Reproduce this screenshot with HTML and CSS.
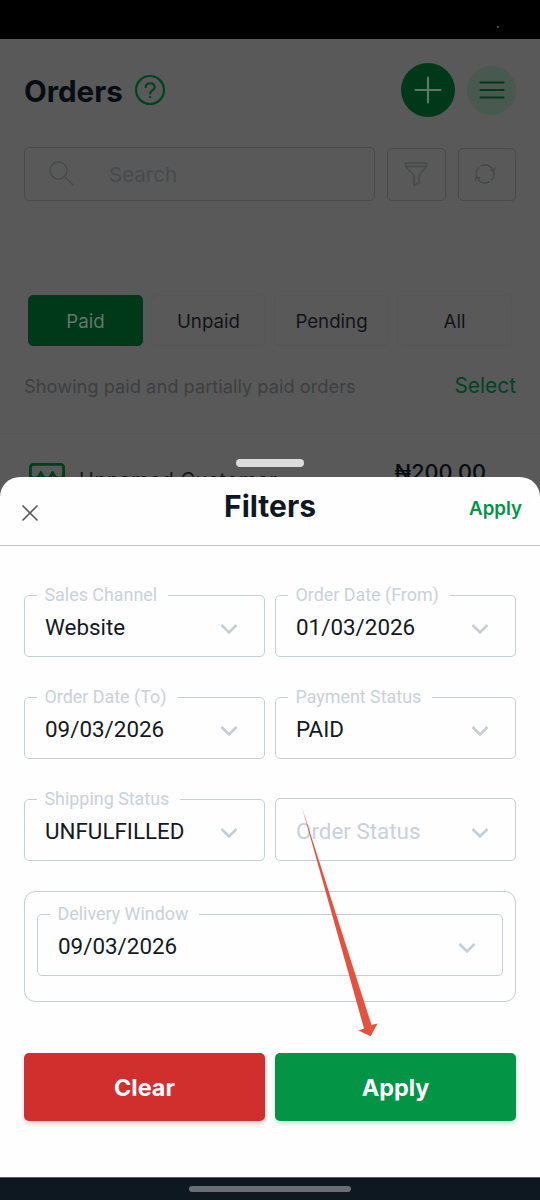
FILE: index.html
```html
<!DOCTYPE html>
<html lang="en">
<head>
<meta charset="utf-8">
<title>Orders</title>
<link rel="stylesheet" href="styles.css">
</head>
<body>
<div class="phone">
  <div class="status-bar"><i class="speck"></i></div>
  <main class="orders">
    <header class="topbar">
      <h1 class="title">Orders</h1>
      <svg class="help" width="32" height="32" viewBox="0 0 32 32" fill="none" stroke="#004322" stroke-width="2.2" stroke-linecap="round"><circle cx="16" cy="16" r="14"/><path d="M11.7 13.2c0-5.3 9-5.3 9 0 0 3.2-4.5 3-4.5 6.3"/><circle cx="16.1" cy="22.9" r=".5" stroke-width="1.4"/></svg>
      <span class="add"><svg width="28" height="28" viewBox="0 0 28 28" stroke="#5c7766" stroke-width="2.2" stroke-linecap="round"><path d="M14 1.5v25M1.5 14h25"/></svg></span>
      <span class="menu"><svg width="26" height="20" viewBox="0 0 26 20" stroke="#00381a" stroke-width="2" stroke-linecap="round"><path d="M1.5 2.5h23M1.5 10h23M1.5 17.5h23"/></svg></span>
    </header>
    <div class="tools">
      <div class="search">
        <svg width="26" height="26" viewBox="0 0 26 26" fill="none" stroke="#474a4b" stroke-width="1.5"><circle cx="9.5" cy="9.5" r="8.5"/><path d="M15.5 15.5l9 9"/></svg>
        <span class="search-text">Search</span>
      </div>
      <span class="tool"><svg width="24" height="26" viewBox="0 0 24 26" fill="none" stroke="#464949" stroke-width="1.4" stroke-linejoin="round"><path d="M1.5 2h21v3.5l-7.5 8.8v7.2l-5 2.8v-10L1.5 5.5zM1.5 5.5h21"/></svg></span>
      <span class="tool"><svg class="refresh" width="24" height="24" viewBox="0 0 24 24" fill="none" stroke="#454848" stroke-width="1.5"><path d="M7.5 4.200A9 9 0 0 1 19.800 7.500M3.500 14.500A9 9 0 0 1 6 5.500M16.500 19.800A9 9 0 0 1 4.200 16.500M20.500 9.500A9 9 0 0 1 18 18.500"/><path d="M17 7.500l3.500 1.500 1.600-3.500M7 16.500l-3.500-1.500-1.600 3.500"/></svg></span>
    </div>
    <div class="tabs">
      <span class="tab tab-active">Paid</span>
      <span class="tab">Unpaid</span>
      <span class="tab">Pending</span>
      <span class="tab">All</span>
    </div>
    <div class="summary"><span class="showing">Showing paid and partially paid orders</span><span class="select">Select</span></div>
    <div class="order">
      <svg class="shop" width="38" height="34" viewBox="0 0 38 34" fill="none" stroke="#003d1d" stroke-width="2.8" stroke-linejoin="round"><path d="M2.400 32V5.500Q2.400 2.400 5.500 2.400H32.500Q35.600 2.400 35.600 5.500V32"/><path d="M2.400 13.500C4 18 11 17 13 10.500 15 18 22 18 24.500 10.500 27 17 34 18 35.600 13.500"/></svg>
      <span class="customer">Unnamed Customer</span>
      <span class="amount">₦200.00</span>
      <i class="handle"></i>
    </div>
  </main>
  <section class="sheet">
    <header class="sheet-head">
      <svg class="close" width="18" height="18" viewBox="0 0 18 18" stroke="#565656" stroke-width="1.6"><path d="M1.5 1.5l15 15M16.5 1.5l-15 15"/></svg>
      <h2 class="sheet-title">Filters</h2>
      <span class="head-apply">Apply</span>
    </header>
    <div class="form">
      <div class="grid">
        <fieldset class="field"><legend>Sales Channel</legend><div class="value"><span>Website</span><svg class="chevron" viewBox="0 0 18 12"><path d="M1.5 2l7.500 7.500L16.500 2"/></svg></div></fieldset>
        <fieldset class="field"><legend>Order Date (From)</legend><div class="value"><span>01/03/2026</span><svg class="chevron" viewBox="0 0 18 12"><path d="M1.5 2l7.500 7.500L16.500 2"/></svg></div></fieldset>
        <fieldset class="field"><legend>Order Date (To)</legend><div class="value"><span>09/03/2026</span><svg class="chevron" viewBox="0 0 18 12"><path d="M1.5 2l7.500 7.500L16.500 2"/></svg></div></fieldset>
        <fieldset class="field"><legend>Payment Status</legend><div class="value"><span>PAID</span><svg class="chevron" viewBox="0 0 18 12"><path d="M1.5 2l7.500 7.500L16.500 2"/></svg></div></fieldset>
        <fieldset class="field"><legend>Shipping Status</legend><div class="value"><span>UNFULFILLED</span><svg class="chevron" viewBox="0 0 18 12"><path d="M1.5 2l7.500 7.500L16.500 2"/></svg></div></fieldset>
        <fieldset class="field field-empty"><div class="value"><span>Order Status</span><svg class="chevron" viewBox="0 0 18 12"><path d="M1.5 2l7.500 7.500L16.500 2"/></svg></div></fieldset>
      </div>
      <div class="window">
        <fieldset class="field"><legend>Delivery Window</legend><div class="value"><span>09/03/2026</span><svg class="chevron" viewBox="0 0 18 12"><path d="M1.5 2l7.500 7.500L16.500 2"/></svg></div></fieldset>
      </div>
      <div class="actions">
        <span class="btn btn-clear">Clear</span>
        <span class="btn btn-apply">Apply</span>
      </div>
    </div>
  </section>
  <footer class="nav-bar"><i class="nav-pill"></i></footer>
  <svg class="pointer" width="80" height="232" viewBox="0 0 80 232"><path d="M2 1.5L64 222.500 58.500 224.500 70.500 230.300 77.500 217.500 71.500 219z" fill="#e6503c"/></svg>
</div>
</body>
</html>
```

FILE: styles.css
```css
* { box-sizing: border-box; }
body { margin: 0; background: #595959; font-family: Inter, sans-serif; }
.phone { position: relative; width: 540px; height: 1200px; overflow: hidden; display: flex; flex-direction: column; }
svg { display: block; flex: none; }

.status-bar { flex: none; height: 39px; background: #000; padding: 26px 41px 0; display: flex; justify-content: flex-end; }
.speck { width: 2px; height: 2px; background: #484848; }

.orders { flex: none; height: 438px; overflow: hidden; background: #595959; }
.topbar { display: flex; align-items: center; height: 102px; padding: 0 24px; }
.title { margin: 2px 0 0; font-size: 29.5px; line-height: 36px; font-weight: 700; color: #070c12; }
.help { margin-left: 11px; }
.add, .menu { display: flex; align-items: center; justify-content: center; border-radius: 50%; }
.add { width: 54px; height: 54px; margin-left: auto; background: #00381a; }
.menu { width: 49px; height: 49px; margin-left: 12px; background: #485950; }

.tools { display: flex; align-items: center; gap: 12px; padding: 6px 24px 0; }
.search { display: flex; align-items: center; width: 351px; height: 54px; padding-left: 24px; border: 1.5px solid #484b4c; border-radius: 5px; }
.search-text { margin-left: 34px; font-size: 20.5px; color: #474a4c; }
.tool { display: flex; align-items: center; justify-content: center; width: 58.5px; height: 53px; border: 1.5px solid #484b4b; border-radius: 5px; }
.refresh { margin-right: 3px; }

.tabs { display: grid; grid-template-columns: repeat(4, 115px); gap: 8px; padding: 94px 28px 0; }
.tab { height: 51px; line-height: 51px; text-align: center; font-size: 18.7px; color: #111417; border: 1px solid #555656; border-radius: 5px; }
.tab-active { background: #00381a; border-color: #00381a; color: #64776c; }
.summary { display: flex; align-items: center; justify-content: space-between; height: 88px; padding: 0 24px 8px; border-bottom: 1px solid #535454; }
.showing { font-size: 18.3px; color: #3d3f40; white-space: nowrap; }
.select { font-size: 20.9px; color: #004322; }
.order { position: relative; display: flex; padding: 28px 54px 0 28px; height: 80px; }
.customer { margin-left: 13px; padding-top: 4px; font-size: 20px; line-height: 28px; letter-spacing: .6px; color: #161819; }
.amount { margin: -2px 0 0 auto; font-size: 21.7px; line-height: 24px; font-weight: 500; color: #070c12; }
.handle { position: absolute; left: 236px; top: 25px; width: 68px; height: 8px; border-radius: 4px; background: #dcdcdc; }

.sheet { flex: none; height: 700px; background: #fefefe; border-radius: 20px 20px 0 0; }
.sheet-head { display: grid; grid-template-columns: 1fr auto 1fr; height: 69px; padding: 0 18px 0 21px; border-bottom: 1px solid #bfc1c2; }
.close { margin-top: 27px; }
.sheet-title { margin: 11px 0 0 -3px; font-size: 30px; line-height: 36px; font-weight: 700; color: #0e1822; }
.head-apply { margin-top: 20px; justify-self: end; font-size: 18.7px; line-height: 24px; font-weight: 600; color: #039446; }

.form { padding: 39px 24px 0; }
.grid { display: grid; grid-template-columns: 241px 241px; column-gap: 10px; row-gap: 30px; }
.field { min-width: 0; margin: 0; padding: 0 0 0 12px; height: 72px; border: 1.5px solid #c5ced6; border-radius: 5px; font-family: Roboto, sans-serif; }
.field legend { height: 20px; line-height: 20px; padding: 0 10.5px 0 7.5px; font-size: 17.9px; color: #c9d1d9; }
.field-empty { height: 63px; margin-top: 9px; padding-top: 10px; }
.value { display: flex; align-items: center; justify-content: space-between; height: 44px; padding: 0 26px 0 8px; font-size: 22.4px; color: #14191f; }
.field-empty .value { color: #c9d1d9; }
.chevron { width: 18px; height: 12px; margin-top: 4px; fill: none; stroke: #c5ced7; stroke-width: 2.6; }
.window { margin-top: 30px; height: 111px; padding: 12px 12px 0; border: 1.5px solid #c5ced6; border-radius: 11px; }

.actions { display: grid; grid-template-columns: 241px 241px; gap: 10px; margin-top: 51px; }
.btn { height: 68px; line-height: 70px; text-align: center; border-radius: 5px; font-size: 23.4px; font-weight: 700; color: #fff; }
.btn-clear { background: #d12f2e; box-shadow: 0 3px 4px rgba(209, 47, 46, .22); }
.btn-apply { background: #039446; box-shadow: 0 3px 4px rgba(3, 148, 70, .22); }

.nav-bar { flex: none; height: 23px; background: #0d1820; border-top: 1px solid #535c62; display: flex; justify-content: center; padding-top: 8px; }
.nav-pill { width: 162px; height: 6px; border-radius: 3px; background: #686e73; }
.pointer { position: absolute; left: 300px; top: 806px; }
```
